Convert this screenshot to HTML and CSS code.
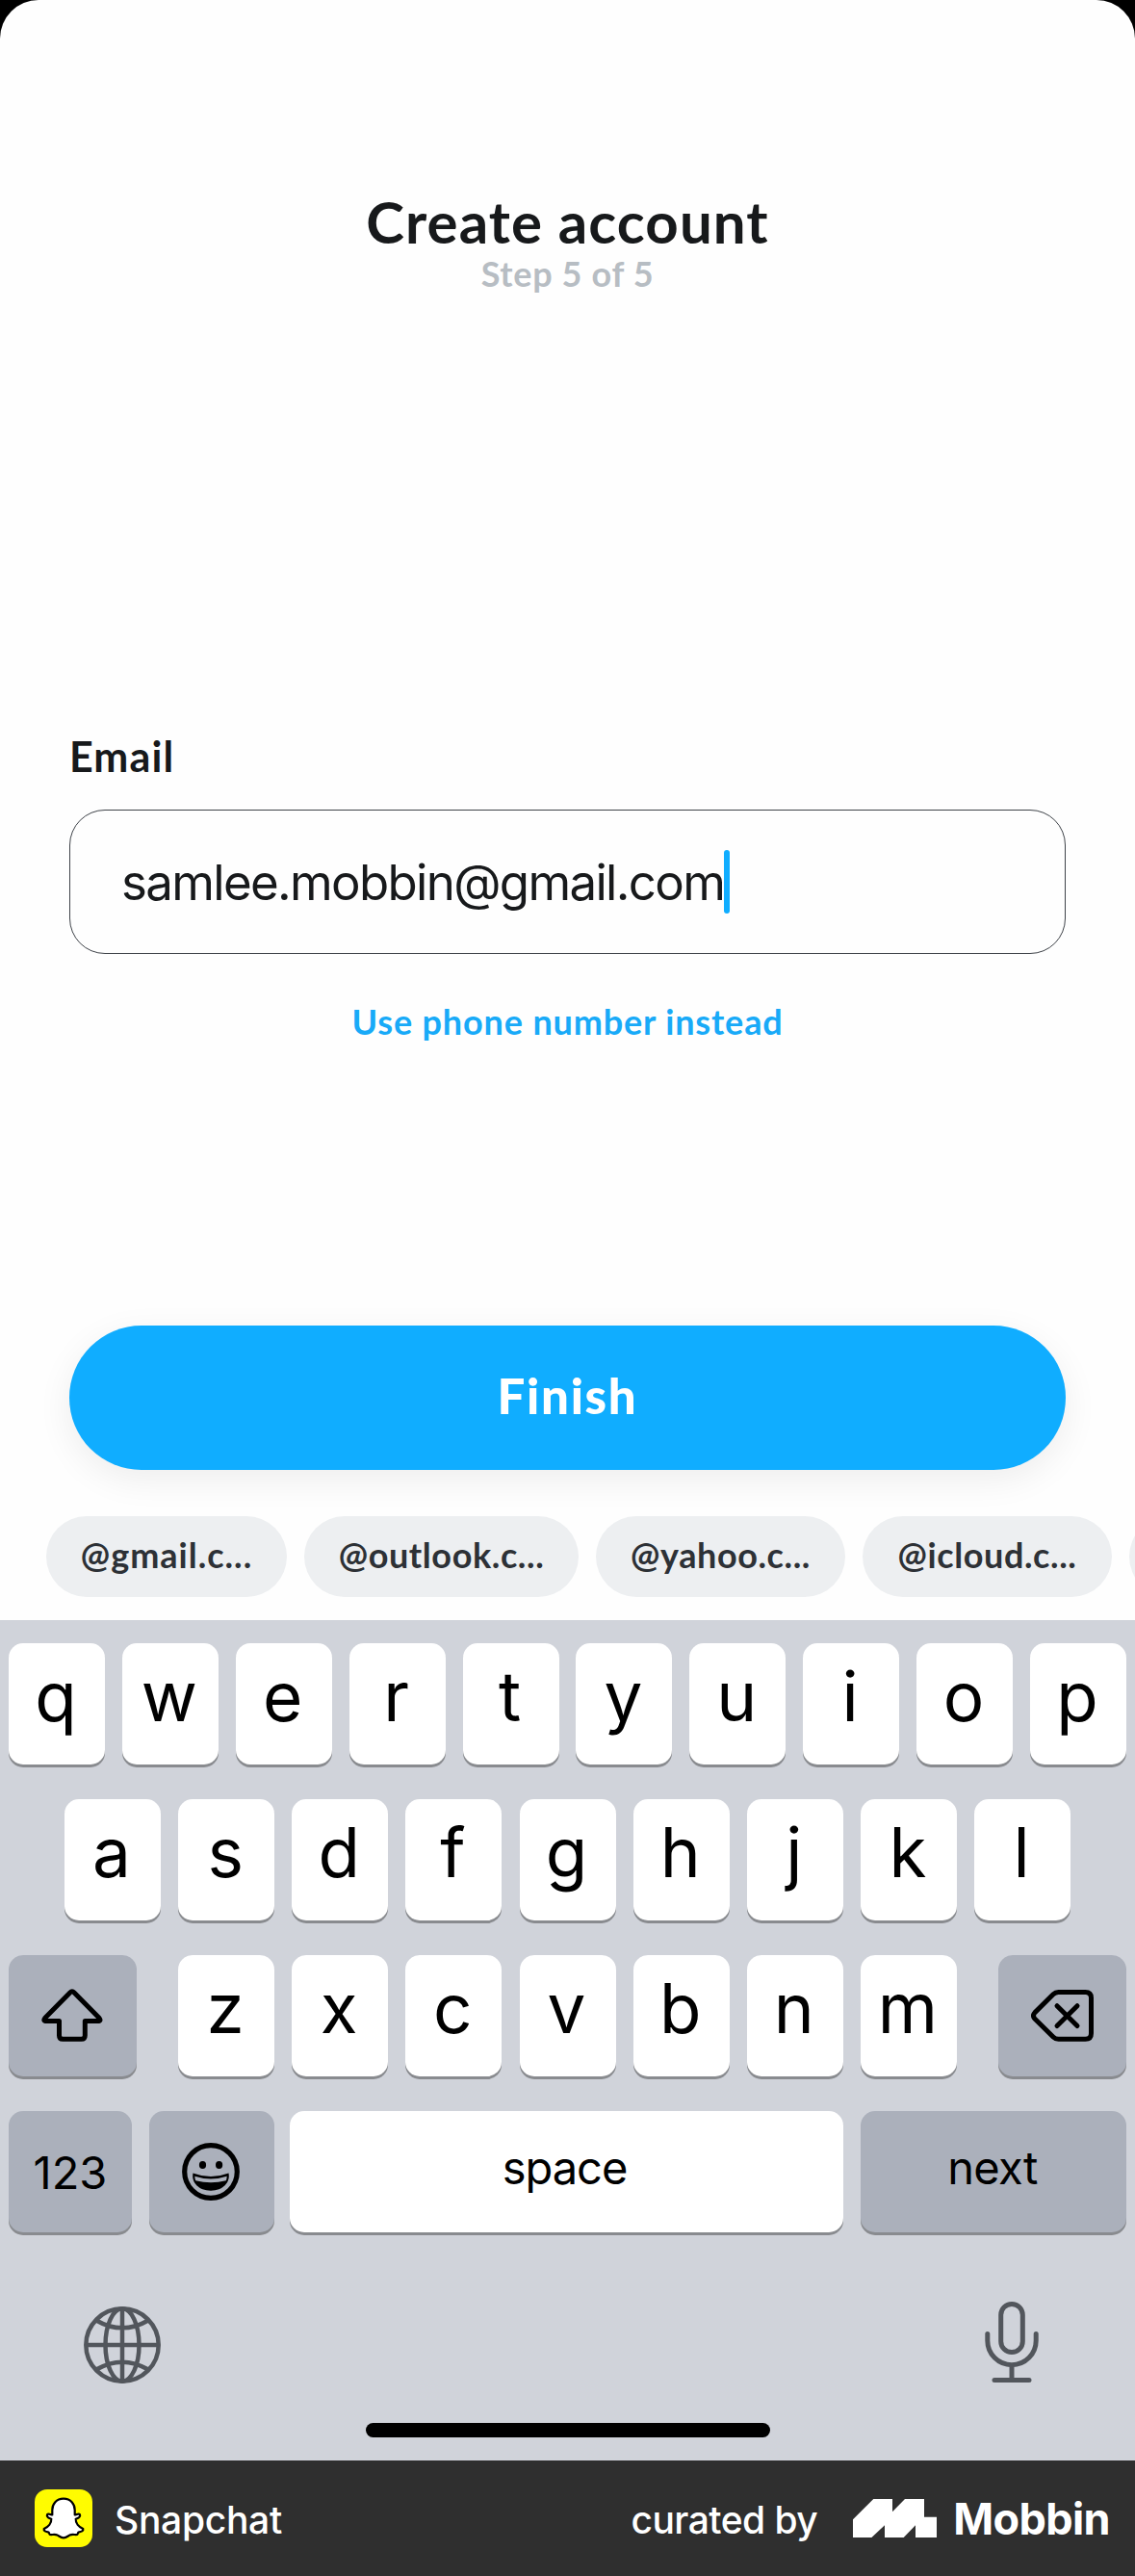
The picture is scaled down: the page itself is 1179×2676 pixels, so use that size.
FILE: index.html
```html
<!DOCTYPE html>
<html lang="en">
<head>
<meta charset="utf-8">
<title>Create account</title>
<link rel="stylesheet" href="styles.css">
</head>
<body>
<main class="screen">
  <header class="header">
    <h1 class="title">Create account</h1>
    <p class="step">Step 5 of 5</p>
  </header>

  <section class="form">
    <div class="label">Email</div>
    <div class="input"><span class="value">samlee.mobbin@gmail.com</span><span class="caret"></span></div>
    <a class="link">Use phone number instead</a>
    <div class="finish">Finish</div>
  </section>

  <div class="chips">
    <div class="chip chip-gmail">@gmail.c...</div>
    <div class="chip chip-outlook">@outlook.c...</div>
    <div class="chip chip-yahoo">@yahoo.c...</div>
    <div class="chip chip-icloud">@icloud.c...</div>
    <div class="chip chip-more"></div>
  </div>

  <section class="keyboard">
    <div class="row">
      <div class="key">q</div><div class="key">w</div><div class="key">e</div><div class="key">r</div><div class="key">t</div><div class="key">y</div><div class="key">u</div><div class="key">i</div><div class="key">o</div><div class="key">p</div>
    </div>
    <div class="row row-home">
      <div class="key">a</div><div class="key">s</div><div class="key">d</div><div class="key">f</div><div class="key">g</div><div class="key">h</div><div class="key">j</div><div class="key">k</div><div class="key">l</div>
    </div>
    <div class="row">
      <div class="key dark shift">
        <svg width="64" height="56" viewBox="0 0 64 56" fill="none" stroke="#000" stroke-width="5" stroke-linejoin="round"><path d="M29.700 3.900Q31.900 1.700 34.100 3.900L60 30.200Q62.600 33.500 58.500 33.500H45.300V48.500Q45.300 52.300 41.500 52.300H22.300Q18.500 52.300 18.500 48.500V33.500H5.300Q1.200 33.500 3.800 30.200Z"/></svg>
      </div>
      <div class="key">z</div><div class="key">x</div><div class="key">c</div><div class="key">v</div><div class="key">b</div><div class="key">n</div><div class="key">m</div>
      <div class="key dark delete">
        <svg width="66" height="54" viewBox="0 0 66 54" fill="none" stroke="#000" stroke-width="5" stroke-linecap="round" stroke-linejoin="round"><path d="M28.500 2.500H56.500Q62.500 2.500 62.500 8.500V45.300Q62.500 51.300 56.500 51.300H28.500Q25.300 51.300 23 49L4 30.300Q1 27 4 23.600L23 4.800Q25.300 2.500 28.500 2.500Z"/><path d="M27 16.700L48 37.600M48 16.700L27 37.600"/></svg>
      </div>
    </div>
    <div class="row row-bottom">
      <div class="key dark small numbers">123</div>
      <div class="key dark emoji">
        <svg width="60" height="60" viewBox="0 0 60 60"><circle cx="30" cy="30" r="27.300" fill="none" stroke="#000" stroke-width="5.200"/><ellipse cx="21.500" cy="23" rx="3.600" ry="4"/><ellipse cx="38.600" cy="23" rx="3.600" ry="4"/><path d="M11.500 31.500Q30 38.500 48.500 31.500C50.500 41 42.500 49.700 30 49.700S9.500 41 11.500 31.500Z"/><path d="M13.300 34.700Q30 40.200 46.700 34.700Q46.500 38 45.700 39.300Q30 43.300 14.300 39.300Q13.500 38 13.300 34.700Z" fill="#abb0bb"/></svg>
      </div>
      <div class="key small space">space</div>
      <div class="key dark small next">next</div>
    </div>
    <div class="tools">
      <svg width="80" height="80" viewBox="0 0 80 80" fill="none" stroke="#52565c" stroke-width="4.500"><circle cx="40" cy="40" r="37.700"/><ellipse cx="40" cy="40" rx="17.500" ry="37.700"/><path d="M40 2V78M2 40H78M13.500 14.700Q40 30 66.500 14.700M13.500 65.300Q40 50 66.500 65.300"/></svg>
      <svg class="mic" width="62" height="88" viewBox="0 0 62 88" fill="none" stroke="#52565c" stroke-width="5" stroke-linecap="round"><rect x="19.700" y="3.500" width="22.600" height="50" rx="11.300"/><path d="M5.800 34.500V41.500a25.200 25.200 0 0 0 50.400 0V34.500M31 67V82M13 82.500H49"/></svg>
    </div>
    <div class="home"></div>
  </section>
</main>

<footer class="footer">
  <svg class="app-icon" width="60" height="60" viewBox="0 0 60 60"><rect width="60" height="60" rx="13" fill="#fffc00"/><path d="M30 9.700C22.500 9.700 18.300 15 18.300 21.500V26.500C16.500 26.700 14.500 24.500 13 26.300C12 28.500 15 30 17.300 30.700C17.700 35 14 39 9.700 41C9 43.500 12.500 44 14.500 44.500C15.300 45.500 15 46.500 16 47C18.500 47.300 21 46.300 23.500 47.500C25.500 48.500 27 50.300 30 50.300S34.500 48.500 36.500 47.500C39 46.300 41.500 47.300 44 47C45 46.500 44.700 45.500 45.500 44.500C47.500 44 51 43.500 50.300 41C46 39 42.300 35 42.700 30.700C45 30 48 28.500 47 26.300C45.500 24.500 43.500 26.700 41.700 26.500V21.500C41.700 15 37.500 9.700 30 9.700Z" fill="#fff" stroke="#000" stroke-width="2.200" stroke-linejoin="round"/></svg>
  <span class="app-name">Snapchat</span>
  <span class="curated">curated by</span>
  <svg class="logo" width="87" height="40" viewBox="0 0 87 40" fill="#fff"><path d="M0 21.300L21.300 0H41V13.300L54 0H74V18.700H87V40H65V27.300L52.700 40H33V27.300L19.400 40H0Z"/></svg>
  <span class="brand">Mobbin</span>
</footer>
</body>
</html>
```
FILE: styles.css
```css
* {
  box-sizing: border-box;
}

body {
  margin: 0;
  width: 1179px;
  height: 2676px;
  overflow: hidden;
  background: #000;
  font-family: Lato, "Liberation Sans", sans-serif;
  color: #17191b;
}

.screen {
  display: flex;
  flex-direction: column;
  height: 2556px;
  background: #fefefe;
  border-radius: 40px 40px 0 0;
  overflow: hidden;
}

.header {
  height: 759px;
  padding-top: 197px;
  text-align: center;
}

.title {
  margin: 0;
  font-size: 60px;
  line-height: 67px;
  font-weight: 700;
  letter-spacing: 1.1px;
}

.step {
  margin: 0;
  font-size: 36px;
  line-height: 40px;
  font-weight: 700;
  letter-spacing: 0.65px;
  color: #b7bdc3;
}

.form {
  display: flex;
  flex-direction: column;
  padding: 0 72px;
}

.label {
  font-size: 43px;
  line-height: 53px;
  height: 52px;
  font-weight: 700;
  letter-spacing: 1.1px;
}

.input {
  display: flex;
  align-items: center;
  height: 150px;
  margin-top: 30px;
  padding-left: 53px;
  border: 1.5px solid #3f4349;
  border-radius: 37px;
}

.value {
  font-family: Inter, sans-serif;
  font-size: 51px;
  letter-spacing: -1.67px;
}

.caret {
  width: 6px;
  height: 66px;
  border-radius: 3px;
  background: #10adff;
}

.link {
  margin-top: 48px;
  text-align: center;
  font-size: 36px;
  line-height: 44px;
  font-weight: 700;
  letter-spacing: 0.85px;
  color: #18aaf8;
}

.finish {
  height: 150px;
  margin-top: 294px;
  border-radius: 75px;
  background: #10adff;
  box-shadow: 0 10px 36px rgba(0, 0, 0, 0.07);
  color: #fff;
  text-align: center;
  font-size: 51px;
  line-height: 145px;
  font-weight: 900;
  letter-spacing: 1.7px;
}

.chips {
  display: flex;
  gap: 18px;
  margin-top: 48px;
  padding-left: 48px;
}

.chip {
  flex: none;
  height: 84px;
  border-radius: 42px;
  background: #edeff1;
  color: #2d3136;
  text-align: center;
  font-size: 36px;
  line-height: 80px;
  font-weight: 700;
  letter-spacing: 0.6px;
}

.chip-gmail { width: 250px; letter-spacing: 1px; }
.chip-outlook { width: 285px; }
.chip-yahoo { width: 259px; }
.chip-icloud { width: 259px; }
.chip-more { width: 250px; }

.keyboard {
  flex: 1;
  display: flex;
  flex-direction: column;
  gap: 36px;
  margin-top: 24px;
  padding: 24px 9px 0;
  background: #d0d3da;
  font-family: Inter, sans-serif;
  color: #000;
}

.row {
  display: flex;
  justify-content: space-between;
  height: 126px;
}

.row-home {
  padding: 0 58px;
}

.row-bottom {
  justify-content: flex-start;
  gap: 18px;
}

.key {
  display: flex;
  align-items: center;
  justify-content: center;
  width: 100px;
  padding: 0 2px 16px 0;
  border-radius: 15px;
  background: #fff;
  box-shadow: 0 3px 0 #898b8f;
  font-size: 71px;
  line-height: 1;
  font-weight: 400;
}

.dark {
  padding-bottom: 0;
  background: #abb0bb;
}

.shift,
.delete {
  width: 133px;
}

.shift {
  margin-right: 25px;
  padding-right: 2px;
}

.delete {
  margin-left: 25px;
  padding-right: 0;
}

.small {
  font-size: 47px;
}

.numbers {
  width: 128px;
  padding-right: 0;
}

.emoji {
  width: 130px;
  margin-right: -2px;
}

.space {
  width: 575px;
  padding: 0 4px 10px 0;
  letter-spacing: -1px;
}

.next {
  width: 276px;
  padding-bottom: 10px;
  letter-spacing: -0.6px;
}

.tools {
  display: flex;
  justify-content: space-between;
  align-items: flex-start;
  height: 88px;
  margin-top: 35px;
  padding: 0 88px 0 78px;
}

.tools svg:first-child {
  margin-top: 6px;
}

.home {
  width: 420px;
  height: 15px;
  margin: 3px auto 0;
  border-radius: 8px;
  background: #000;
}

.footer {
  display: flex;
  align-items: center;
  height: 120px;
  padding: 0 26px 0 36px;
  background: #2f2f2f;
  color: #fff;
  font-family: Inter, sans-serif;
}

.app-name,
.curated {
  padding-top: 3px;
  font-size: 39px;
  font-weight: 500;
}

.app-name {
  margin-left: 23px;
  letter-spacing: -0.3px;
}

.curated {
  margin-left: auto;
  letter-spacing: -0.55px;
}

.logo {
  margin-left: 37px;
}

.brand {
  margin-left: 17px;
  font-size: 45px;
  font-weight: 700;
  letter-spacing: -0.6px;
}
```
